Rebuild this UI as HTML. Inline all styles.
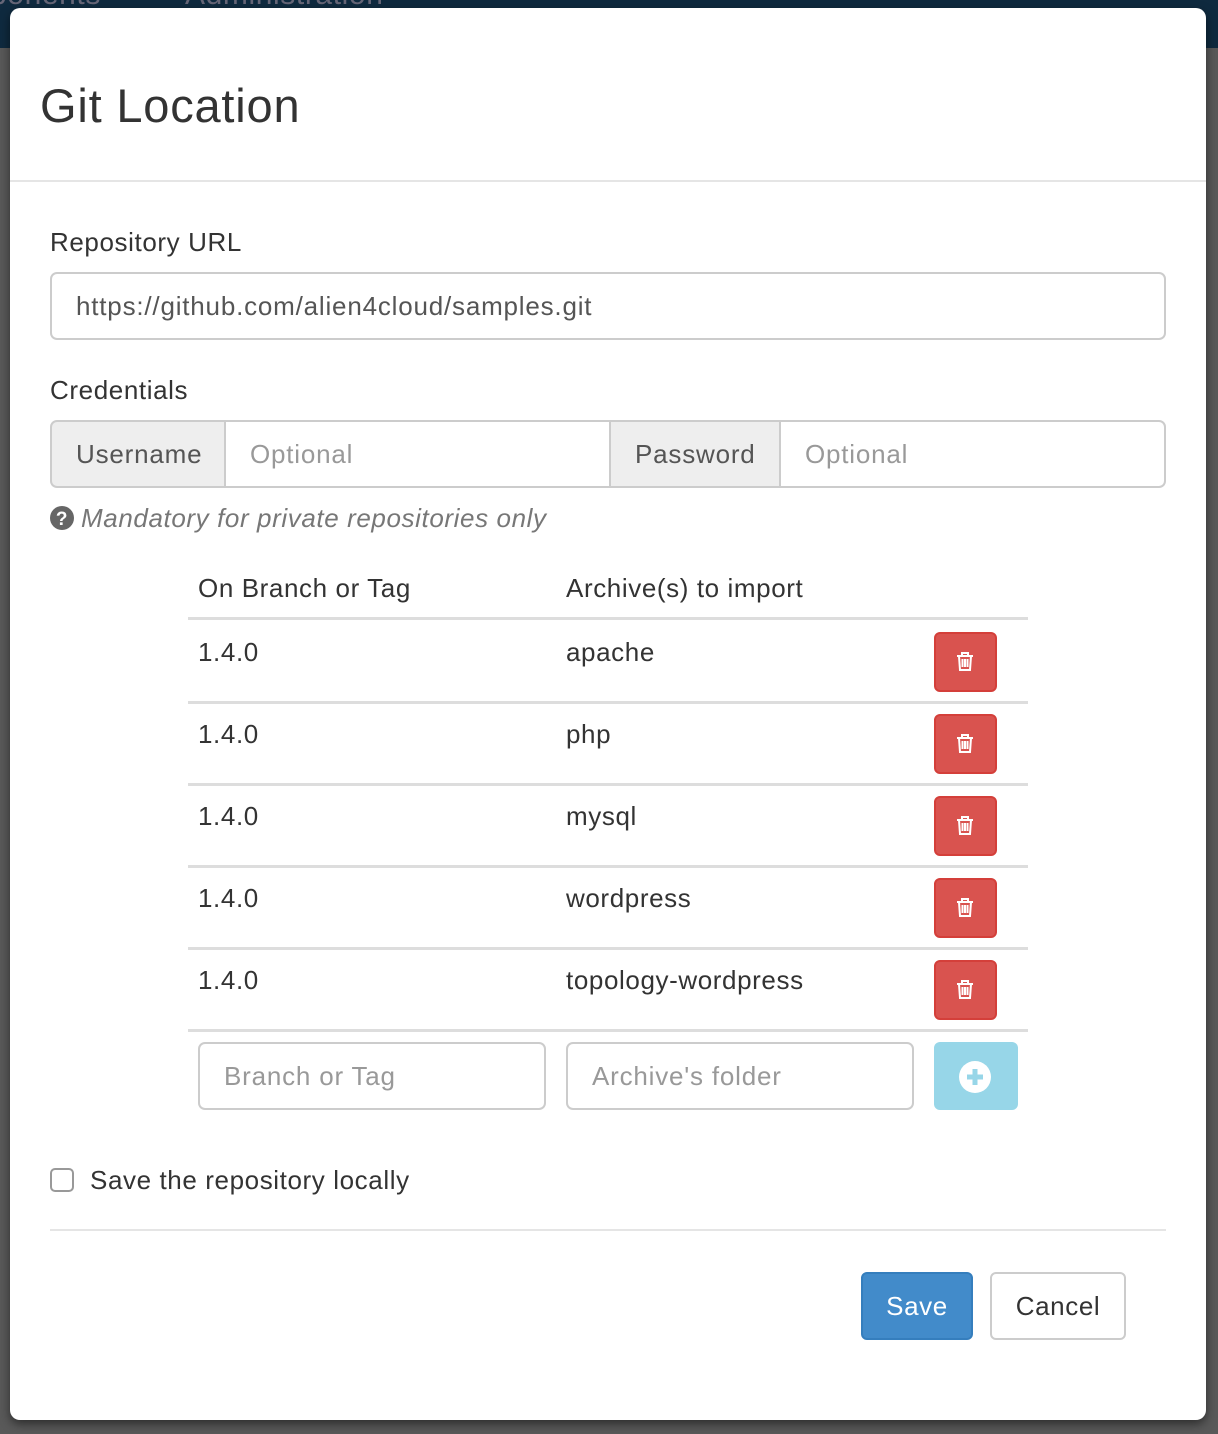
<!DOCTYPE html>
<html><head><meta charset="utf-8"><style>
*{box-sizing:border-box;margin:0;padding:0}
body{width:1218px;height:1434px;background:#595959;font-family:"Liberation Sans",sans-serif;color:#333;position:relative;overflow:hidden;letter-spacing:0.6px}
.nav{position:absolute;left:0;top:0;width:1218px;height:48px;background:#0f2a3f}
.nav span{position:absolute;top:-22px;font-size:30px;color:#667}
.modal{position:absolute;left:10px;top:8px;width:1196px;height:1412px;background:#fff;border-radius:10px;box-shadow:0 4px 10px rgba(0,0,0,.5)}
.a{position:absolute}
h1{position:absolute;left:30px;top:70px;font-size:47px;font-weight:normal;color:#333;letter-spacing:0.8px}
.lab{font-size:26px;color:#333}
.inp{position:absolute;border:2px solid #ccc;border-radius:7px;height:68px;font-size:26px;line-height:64px;padding-left:24px;color:#555;letter-spacing:0.8px}
.ph{color:#999}
.addon{background:#eee;color:#555}
.row{position:absolute;left:178px;width:840px;border-top:3px solid #ddd}
.cell{position:absolute;font-size:26px}
.del{position:absolute;left:924px;width:63px;height:60px;background:#d9534f;border:2px solid #d43f3a;border-radius:6px}
.btn{position:absolute;border-radius:6px;font-size:26px;text-align:center;line-height:64px;height:68px}
</style></head><body>
<div class="nav"><span style="left:-10px">ponents</span><span style="left:185px">Administration</span></div>
<div class="modal">
<h1>Git Location</h1>
<div class="a" style="left:0;top:172px;width:1196px;border-top:2px solid #e5e5e5"></div>
<div class="a lab" style="left:40px;top:219px">Repository URL</div>
<div class="inp" style="left:40px;top:264px;width:1116px">https://github.com/alien4cloud/samples.git</div>
<div class="a lab" style="left:40px;top:367px">Credentials</div>
<div class="inp addon" style="left:40px;top:412px;width:176px;border-radius:7px 0 0 7px">Username</div>
<div class="inp ph" style="left:214px;top:412px;width:387px;border-radius:0">Optional</div>
<div class="inp addon" style="left:599px;top:412px;width:172px;border-radius:0">Password</div>
<div class="inp ph" style="left:769px;top:412px;width:387px;border-radius:0 7px 7px 0">Optional</div>
<svg class="a" style="left:40px;top:498px" width="24" height="24" viewBox="0 0 24 24"><circle cx="12" cy="12" r="12" fill="#666"/><text x="12" y="19" font-size="19" font-weight="bold" fill="#fff" text-anchor="middle" font-family="Liberation Sans">?</text></svg>
<div class="a" style="left:71px;top:495px;font-size:26px;font-style:italic;color:#777">Mandatory for private repositories only</div>
<div class="cell" style="left:188px;top:565px">On Branch or Tag</div>
<div class="cell" style="left:556px;top:565px">Archive(s) to import</div>
<div class="row" style="top:609px"></div>
<div class="cell" style="left:188px;top:629px">1.4.0</div><div class="cell" style="left:556px;top:629px">apache</div><div class="del" style="top:624px"></div>
<div class="row" style="top:693px"></div>
<div class="cell" style="left:188px;top:711px">1.4.0</div><div class="cell" style="left:556px;top:711px">php</div><div class="del" style="top:706px"></div>
<div class="row" style="top:775px"></div>
<div class="cell" style="left:188px;top:793px">1.4.0</div><div class="cell" style="left:556px;top:793px">mysql</div><div class="del" style="top:788px"></div>
<div class="row" style="top:857px"></div>
<div class="cell" style="left:188px;top:875px">1.4.0</div><div class="cell" style="left:556px;top:875px">wordpress</div><div class="del" style="top:870px"></div>
<div class="row" style="top:939px"></div>
<div class="cell" style="left:188px;top:957px">1.4.0</div><div class="cell" style="left:556px;top:957px">topology-wordpress</div><div class="del" style="top:952px"></div>
<div class="row" style="top:1021px"></div>
<svg class="a" style="left:0;top:0" width="1196" height="1100">
<defs><g id="t" fill="none" stroke="#fff" stroke-width="2"><path d="M-8 -6h16M-3 -6v-3h6v3M-6 -6l1 14h10l1 -14M-2.5 -3v8M0 -3v8M2.5 -3v8"/></g></defs>
<use href="#t" x="955" y="654"/><use href="#t" x="955" y="736"/><use href="#t" x="955" y="818"/><use href="#t" x="955" y="900"/><use href="#t" x="955" y="982"/>
</svg>
<div class="inp ph" style="left:188px;top:1034px;width:348px">Branch or Tag</div>
<div class="inp ph" style="left:556px;top:1034px;width:348px">Archive's folder</div>
<div class="a" style="left:924px;top:1034px;width:84px;height:68px;background:#97d6e8;border-radius:6px"></div>
<svg class="a" style="left:948px;top:1052px" width="34" height="34" viewBox="0 0 34 34"><circle cx="17" cy="17" r="16" fill="#fff"/><path d="M17 9v16M9 17h16" stroke="#97d6e8" stroke-width="5"/></svg>
<div class="a" style="left:40px;top:1160px;width:24px;height:24px;border:2px solid #999;border-radius:5px"></div>
<div class="a lab" style="left:80px;top:1157px">Save the repository locally</div>
<div class="a" style="left:40px;top:1221px;width:1116px;border-top:2px solid #e5e5e5"></div>
<div class="btn" style="left:851px;top:1264px;width:112px;background:#428bca;border:2px solid #357ebd;color:#fff">Save</div>
<div class="btn" style="left:980px;top:1264px;width:136px;background:#fff;border:2px solid #ccc;color:#333">Cancel</div>
</div>
</body></html>
